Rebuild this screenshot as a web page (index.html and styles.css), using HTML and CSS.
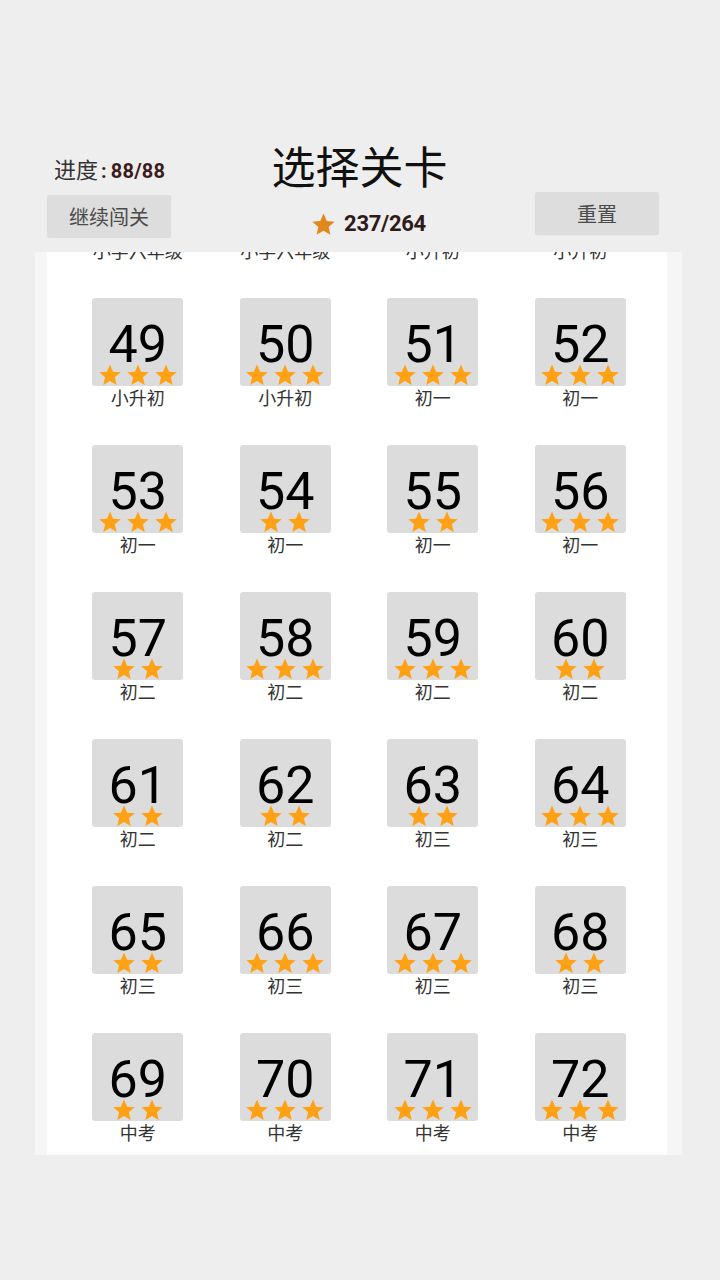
FILE: index.html
```html
<!DOCTYPE html>
<html lang="zh">
<head>
    <meta charset="UTF-8">
    <meta name="viewport" content="width=720, initial-scale=1.0">
    <title>选择关卡</title>
    <link rel="stylesheet" href="styles.css">
</head>
<body>
    <div class="top">
        <div class="side left">
            <div class="progress">进度<b><span class="colon">:</span>88/88</b></div>
            <button type="button" class="btn">继续闯关</button>
        </div>
        <div class="middle">
            <h1>选择关卡</h1>
            <div class="total">
                <svg class="bigstar" viewBox="0 0 24 24" width="25" height="25"><path d="M12 1.5l3.1 7.2 7.6.6-5.8 5 1.8 7.6L12 17.9l-6.7 4 1.8-7.6-5.8-5 7.6-.6z" fill="#e2871c"/></svg>
                <b>237/264</b>
            </div>
        </div>
        <div class="side right">
            <button type="button" class="btn">重置</button>
        </div>
    </div>

    <div class="panel">
        <div class="levels" id="levels"></div>
    </div>

    <script>
        // level number, stars, grade
        const levels = [
            [45, 3, "小学六年级"], [46, 3, "小学六年级"], [47, 3, "小升初"], [48, 3, "小升初"],
            [49, 3, "小升初"], [50, 3, "小升初"], [51, 3, "初一"], [52, 3, "初一"],
            [53, 3, "初一"], [54, 2, "初一"], [55, 2, "初一"], [56, 3, "初一"],
            [57, 2, "初二"], [58, 3, "初二"], [59, 3, "初二"], [60, 2, "初二"],
            [61, 2, "初二"], [62, 2, "初二"], [63, 2, "初三"], [64, 3, "初三"],
            [65, 2, "初三"], [66, 3, "初三"], [67, 3, "初三"], [68, 2, "初三"],
            [69, 2, "中考"], [70, 3, "中考"], [71, 3, "中考"], [72, 3, "中考"]
        ];

        const starSvg = '<svg viewBox="0 0 24 24" width="24" height="24"><path d="M12 1.5l3.1 7.2 7.6.6-5.8 5 1.8 7.6L12 17.9l-6.7 4 1.8-7.6-5.8-5 7.6-.6z" fill="#ffa114"/></svg>';

        const box = document.getElementById("levels");
        for (const [num, stars, grade] of levels) {
            const cell = document.createElement("div");
            cell.className = "cell";
            cell.innerHTML =
                '<div class="tile"><div class="num">' + num + '</div>' +
                '<div class="stars">' + starSvg.repeat(stars) + '</div></div>' +
                '<div class="grade">' + grade + '</div>';
            box.appendChild(cell);
        }
    </script>
</body>
</html>
```

FILE: styles.css
```css
body, html {
    margin: 0;
    height: 100%;
    background: #eeeeee;
    overflow: hidden;
    font-family: Roboto, "Noto Sans CJK SC", sans-serif;
}

.top {
    display: flex;
    align-items: flex-start;
    padding: 140px 60px 0 47px;
    height: 112px;
}

.side {
    width: 125px;
}

.progress {
    font-family: "Noto Sans CJK SC", sans-serif;
    font-size: 22px;
    color: #333;
    padding: 15px 0 0 7px;
    height: 40px;
    line-height: 26px;
    white-space: nowrap;
}

.progress b {
    font-family: Roboto, sans-serif;
    font-size: 20px;
    color: #3b1c1c;
    letter-spacing: 0.2px;
}

.colon {
    margin: 0 4px 0 3px;
}

.btn {
    display: block;
    width: 124px;
    height: 42px;
    border: 0;
    border-radius: 2px;
    background: #dddddd;
    color: #4a4a4a;
    font-family: "Noto Sans CJK SC", sans-serif;
    font-size: 20px;
    padding: 0;
    box-shadow: 0 1px 1px rgba(0, 0, 0, 0.08);
}

.middle {
    flex: 1;
    text-align: center;
    padding-left: 12px;
}

h1 {
    margin: 0;
    font-family: "Noto Sans CJK SC", sans-serif;
    font-weight: normal;
    font-size: 44px;
    line-height: 50px;
    color: #111;
}

.total {
    display: flex;
    justify-content: center;
    align-items: center;
    margin-top: 19px;
    padding-left: 18px;
}

.bigstar {
    margin-right: 8px;
    margin-top: 3px;
}

.total b {
    font-size: 22px;
    color: #2e1a1a;
    letter-spacing: -0.3px;
}

.right .btn {
    margin-top: 52px;
}

.panel {
    margin: 0 38px 0 35px;
    height: 903px;
    background: #ffffff;
    border-left: 12px solid #f6f6f6;
    border-right: 15px solid #f6f6f6;
    overflow: hidden;
}

.levels {
    display: grid;
    grid-template-columns: repeat(4, 147.5px);
    row-gap: 37px;
    padding-left: 17px;
    margin-top: -101px;
}

.cell {
    display: flex;
    flex-direction: column;
    align-items: center;
}

.tile {
    width: 91px;
    height: 88px;
    box-sizing: border-box;
    padding-top: 21px;
    background: #dcdcdc;
    border-radius: 3px;
    text-align: center;
}

.num {
    font-size: 52px;
    line-height: 52px;
    color: #000;
}

.stars {
    display: flex;
    justify-content: center;
    gap: 4px;
    margin-top: -8px;
    height: 24px;
}

.grade {
    font-family: "Noto Sans CJK SC", sans-serif;
    font-size: 18px;
    line-height: 22px;
    color: #333;
}
```
